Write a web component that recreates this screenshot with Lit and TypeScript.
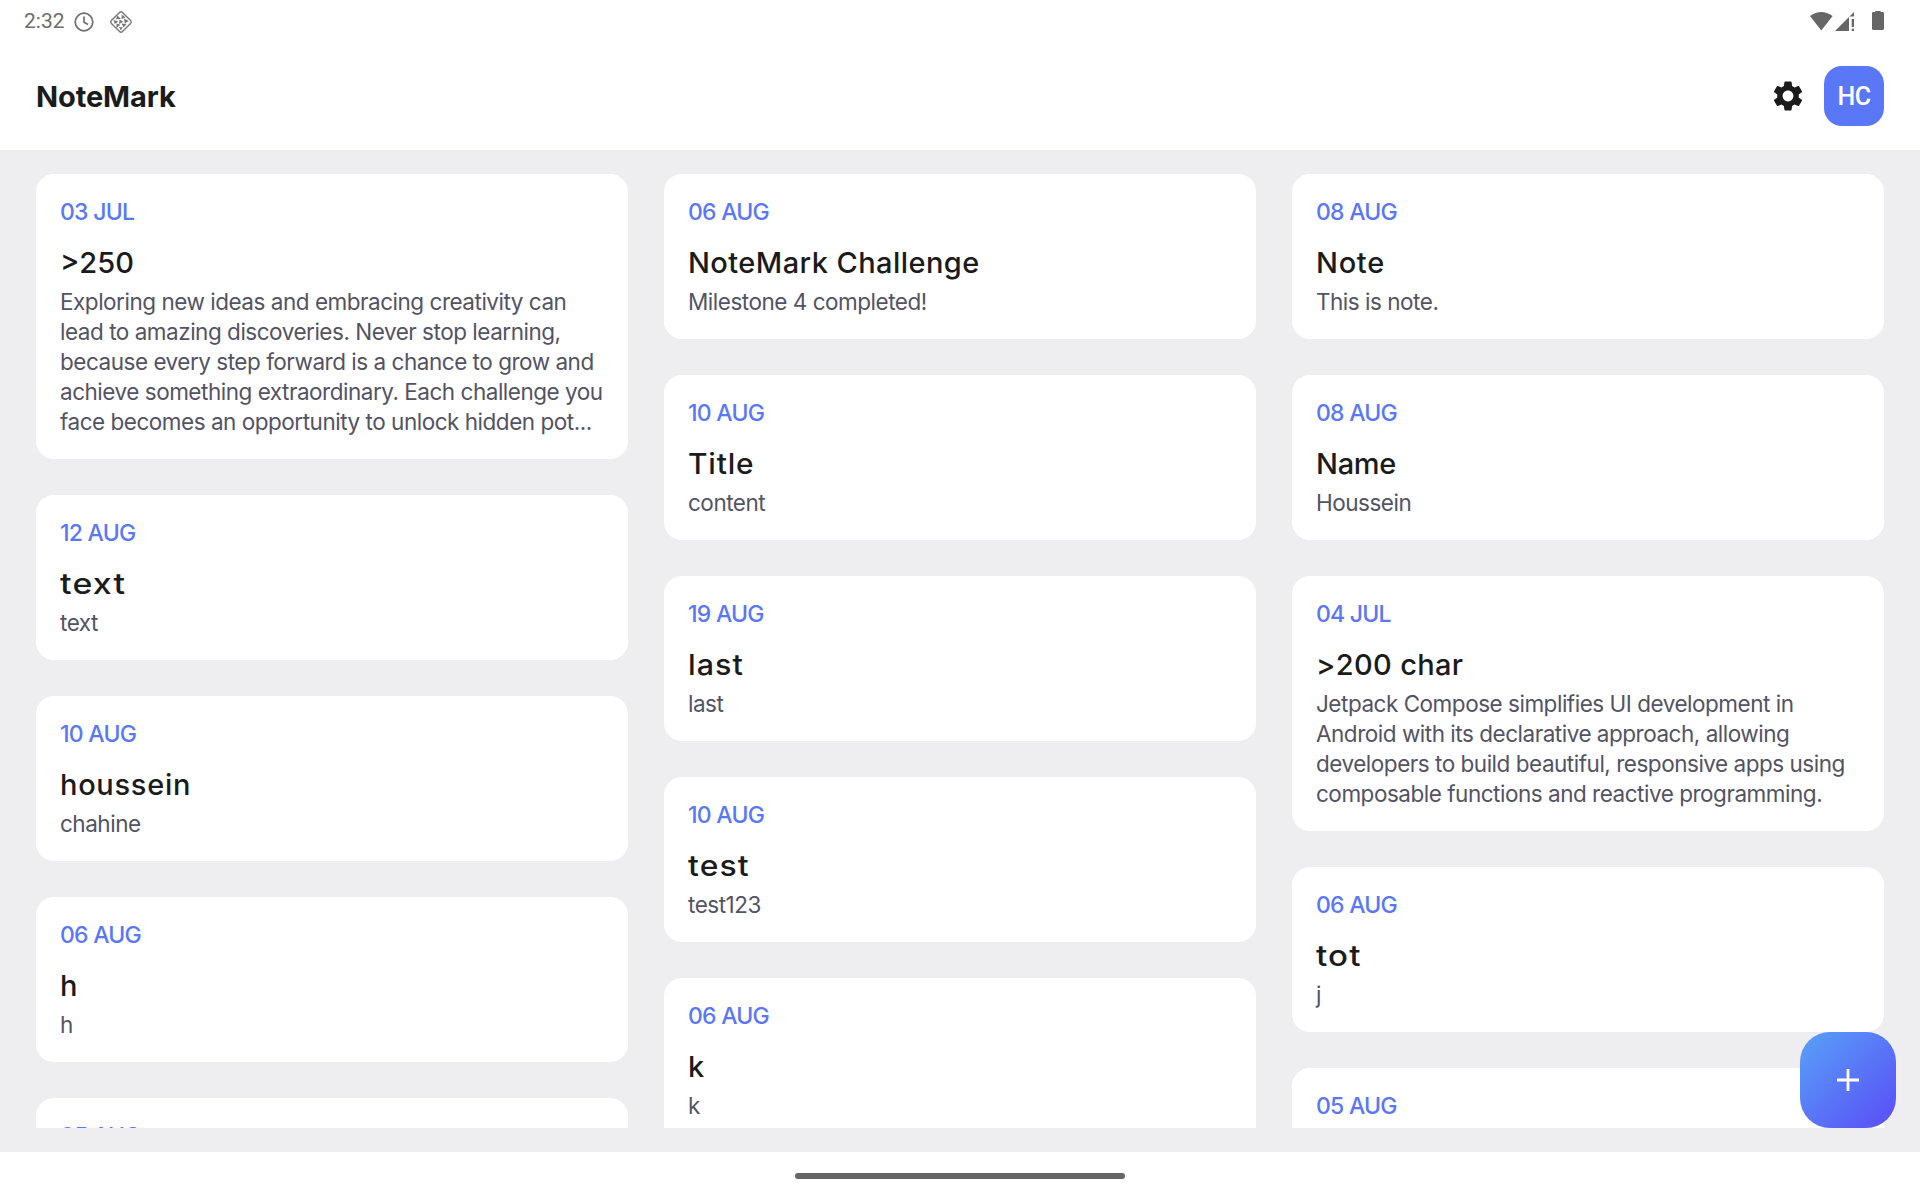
import { LitElement, html, css, svg } from "lit";
import { customElement, property } from "lit/decorators.js";

interface Note {
  date: string;
  title: string;
  /** Extra letter spacing of the title, in pixels. */
  tracking?: number;
  /** Horizontal stretch of the title. */
  stretch?: number;
  body: string[];
}

const COLUMNS: Note[][] = [
  [
    {
      date: "03 JUL",
      title: ">250",
      body: [
        "Exploring new ideas and embracing creativity can",
        "lead to amazing discoveries. Never stop learning,",
        "because every step forward is a chance to grow and",
        "achieve something extraordinary. Each challenge you",
        "face becomes an opportunity to unlock hidden pot...",
      ],
    },
    { date: "12 AUG", title: "text", tracking: 1, stretch: 1.17, body: ["text"] },
    { date: "10 AUG", title: "houssein", tracking: 0.7, body: ["chahine"] },
    { date: "06 AUG", title: "h", body: ["h"] },
    { date: "05 AUG", title: "", body: [""] },
  ],
  [
    { date: "06 AUG", title: "NoteMark Challenge", tracking: 0.43, body: ["Milestone 4 completed!"] },
    { date: "10 AUG", title: "Title", tracking: 0.8, stretch: 1.03, body: ["content"] },
    { date: "19 AUG", title: "last", tracking: 1, stretch: 1.05, body: ["last"] },
    { date: "10 AUG", title: "test", tracking: 1, stretch: 1.1, body: ["test123"] },
    { date: "06 AUG", title: "k", body: ["k"] },
  ],
  [
    { date: "08 AUG", title: "Note", tracking: 0.7, body: ["This is note."] },
    { date: "08 AUG", title: "Name", tracking: -0.3, body: ["Houssein"] },
    {
      date: "04 JUL",
      title: ">200 char",
      tracking: 0.35,
      body: [
        "Jetpack Compose simplifies UI development in",
        "Android with its declarative approach, allowing",
        "developers to build beautiful, responsive apps using",
        "composable functions and reactive programming.",
      ],
    },
    { date: "06 AUG", title: "tot", tracking: 1, stretch: 1.14, body: ["j"] },
    { date: "05 AUG", title: "", body: [""] },
  ],
];

@customElement("note-card")
export class NoteCard extends LitElement {
  @property({ attribute: false }) note!: Note;

  static styles = css`
    :host {
      display: block;
      flex: none;
      box-sizing: border-box;
      padding: 24px 24px 22px;
      border-radius: 18px;
      background: #fff;
    }
    .date {
      height: 47px;
      line-height: 28px;
      font-size: 23px;
      font-weight: 500;
      letter-spacing: -0.75px;
      color: #5977f7;
    }
    .title {
      height: 42px;
      line-height: 36px;
      font-size: 29px;
      font-weight: 500;
      color: #1b1b1c;
      white-space: nowrap;
      transform-origin: 0 50%;
    }
    .line {
      height: 30px;
      line-height: 30px;
      font-size: 22.5px;
      letter-spacing: -0.48px;
      color: #535364;
      white-space: nowrap;
    }
  `;

  render() {
    const { date, title, tracking = 0, stretch = 1, body } = this.note;
    const shape =
      `letter-spacing: ${tracking}px` + (stretch === 1 ? "" : `; transform: scaleX(${stretch})`);
    return html`
      <div class="date">${date}</div>
      <div class="title" style=${shape}>${title}</div>
      ${body.map((line) => html`<div class="line">${line}</div>`)}
    `;
  }
}

const clockIcon = svg`
  <circle cx="10" cy="10" r="8.8" fill="none" stroke="#707070" stroke-width="1.7" />
  <path d="M10 4.4V10.2L14 12.6" fill="none" stroke="#707070" stroke-width="1.7" />
`;

const diamondIcon = svg`
  <path d="M9.6 1.4Q11 .2 12.4 1.4L20.6 9.6Q21.8 11 20.6 12.4L12.4 20.6Q11 21.8 9.6 20.6L1.4 12.4Q.2 11 1.4 9.6Z"
    fill="none" stroke="#777" stroke-width="1.4" />
  <path d="M7.4 4.6L11 8L6 8.2ZM11.6 3.4V8L15.6 6.4ZM3.6 9L8.4 10.6L4.8 13ZM9.6 8.6L13.4 10.8L9 13ZM14 7.6L18.8 10L14.8 12.6ZM6.6 12.4L10.4 13.8L6.4 17ZM11.6 12.6L16.6 13L13.6 16.4ZM9 16L13 16.6L10.8 19.2Z"
    fill="#777" />
`;

@customElement("app-root")
export class AppRoot extends LitElement {
  static styles = css`
    :host {
      display: flex;
      flex-direction: column;
      position: relative;
      width: 1920px;
      height: 1200px;
      overflow: hidden;
      background: #fff;
      font-family: Inter, "Liberation Sans", sans-serif;
    }
    svg {
      display: block;
      flex: none;
    }
    .status {
      display: flex;
      justify-content: space-between;
      height: 42px;
      padding: 0 36px 0 24px;
      box-sizing: border-box;
    }
    .status-left,
    .status-right {
      display: flex;
      align-items: flex-start;
    }
    .time {
      width: 50px;
      line-height: 42px;
      font-family: Roboto, sans-serif;
      font-size: 21px;
      color: #6e6e6e;
    }
    .clock {
      margin-top: 12px;
    }
    .diamond {
      margin: 11px 0 0 16px;
    }
    .status-right svg {
      margin-top: 11px;
    }
    .header {
      display: flex;
      align-items: center;
      height: 108px;
      padding: 0 36px;
      box-sizing: border-box;
    }
    .brand {
      flex: 1;
      padding-top: 1px;
      font-size: 29px;
      font-weight: 700;
      letter-spacing: -0.1px;
      color: #1b1b1c;
    }
    .gear {
      margin-right: 18px;
    }
    .avatar {
      width: 60px;
      height: 60px;
      border-radius: 18px;
      background: #5977f7;
      color: #fff;
      text-align: center;
      line-height: 62px;
      font-family: Roboto, sans-serif;
      font-size: 25px;
      font-weight: 500;
      letter-spacing: -0.5px;
    }
    .board {
      display: grid;
      grid-template-columns: repeat(3, minmax(0, 1fr));
      gap: 36px;
      height: 1002px;
      padding: 24px 36px;
      box-sizing: border-box;
      background: #eeeef0;
    }
    .column {
      display: flex;
      flex-direction: column;
      gap: 36px;
      height: 954px;
      overflow: hidden;
    }
    .nav {
      display: flex;
      justify-content: center;
      align-items: center;
      height: 48px;
    }
    .handle {
      width: 330px;
      height: 6px;
      border-radius: 3px;
      background: #666;
    }
    .fab {
      position: absolute;
      right: 24px;
      bottom: 72px;
      display: grid;
      place-items: center;
      width: 96px;
      height: 96px;
      border-radius: 30px;
      background: linear-gradient(135deg, #58a1f8, #5a4cf7);
    }
  `;

  render() {
    return html`
      <div class="status">
        <div class="status-left">
          <span class="time">2:32</span>
          <svg class="clock" width="20" height="20" viewBox="0 0 20 20">${clockIcon}</svg>
          <svg class="diamond" width="22" height="22" viewBox="0 0 22 22">${diamondIcon}</svg>
        </div>
        <div class="status-right">
          <svg width="74" height="20" viewBox="0 0 74 20" fill="#666">
            <path d="M0 5Q11.3 -2.8 22.6 5L11.3 19.5Z" />
            <path d="M25 20L44 1V5.6H39V20Z" />
            <path d="M41.7 8H44V16H41.7ZM41.7 17.7H44V20H41.7Z" />
            <path d="M63.2 1H65.3V0H70.7V1H72.8Q74 1 74 2.2V17.6Q74 19 72.8 19H63.2Q62 19 62 17.6V2.2Q62 1 63.2 1Z" />
          </svg>
        </div>
      </div>
      <div class="header">
        <div class="brand">NoteMark</div>
        <svg class="gear" width="36" height="36" viewBox="0 0 24 24" fill="#1b1b1c">
          <path d="M19.14 12.94c.04-.3.06-.61.06-.94 0-.32-.02-.64-.07-.94l2.03-1.58c.18-.14.23-.41.12-.61l-1.92-3.32c-.12-.22-.37-.29-.59-.22l-2.39.96c-.5-.38-1.03-.7-1.62-.94l-.36-2.54c-.04-.24-.24-.41-.48-.41h-3.84c-.24 0-.43.17-.47.41l-.36 2.54c-.59.24-1.13.57-1.62.94l-2.39-.96c-.22-.08-.47 0-.59.22L2.74 8.87c-.12.21-.08.47.12.61l2.03 1.58c-.05.3-.09.63-.09.94s.02.64.07.94l-2.03 1.58c-.18.14-.23.41-.12.61l1.92 3.32c.12.22.37.29.59.22l2.39-.96c.5.38 1.03.7 1.62.94l.36 2.54c.05.24.24.41.48.41h3.84c.24 0 .44-.17.47-.41l.36-2.54c.59-.24 1.13-.56 1.62-.94l2.39.96c.22.08.47 0 .59-.22l1.92-3.32c.12-.22.07-.47-.12-.61l-2.01-1.58zM12 15.6c-1.98 0-3.6-1.62-3.6-3.6s1.62-3.6 3.6-3.6 3.6 1.62 3.6 3.6-1.62 3.6-3.6 3.6z" />
        </svg>
        <div class="avatar">HC</div>
      </div>
      <div class="board">
        ${COLUMNS.map(
          (column) => html`
            <div class="column">
              ${column.map((note) => html`<note-card .note=${note}></note-card>`)}
            </div>
          `,
        )}
      </div>
      <div class="nav"><div class="handle"></div></div>
      <div class="fab">
        <svg width="24" height="24" viewBox="0 0 24 24">
          <path d="M12 1V23M1 12H23" stroke="#fff" stroke-width="2.8" />
        </svg>
      </div>
    `;
  }
}
